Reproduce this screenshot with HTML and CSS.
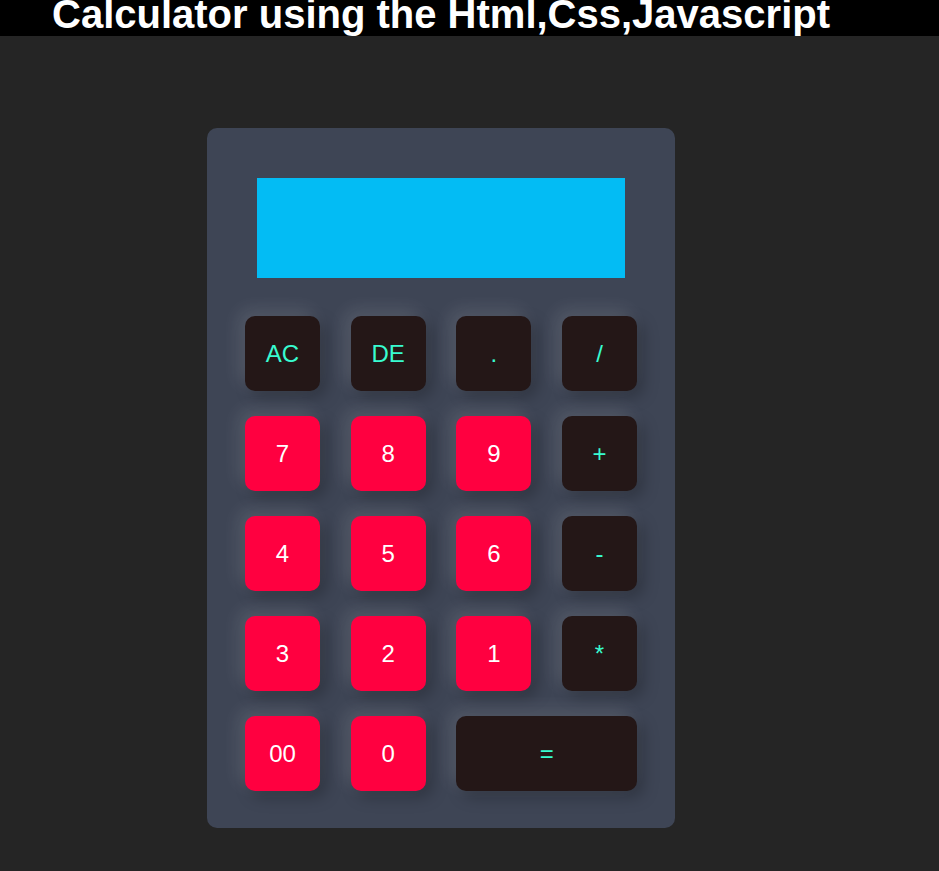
FILE: index.html
```html
<!DOCTYPE html>
<html lang="en">
<head>
    <meta charset="UTF-8">
    <title>Calculator</title>
    <link rel="stylesheet" href="styles.css">
</head>
<body>

    <div class="topbar">
        <h1>Calculator using the Html,Css,Javascript</h1>
    </div>

    <div class="calculator">
        <input type="text" class="display" id="display" readonly>

        <div class="keys">
            <button class="key op" data-action="clear">AC</button>
            <button class="key op" data-action="delete">DE</button>
            <button class="key op">.</button>
            <button class="key op">/</button>

            <button class="key num">7</button>
            <button class="key num">8</button>
            <button class="key num">9</button>
            <button class="key op">+</button>

            <button class="key num">4</button>
            <button class="key num">5</button>
            <button class="key num">6</button>
            <button class="key op">-</button>

            <button class="key num">3</button>
            <button class="key num">2</button>
            <button class="key num">1</button>
            <button class="key op">*</button>

            <button class="key num">00</button>
            <button class="key num">0</button>
            <button class="key op equal" data-action="equal">=</button>
        </div>
    </div>

    <script>
        const display = document.getElementById('display');

        document.querySelectorAll('.key').forEach(key => {
            key.addEventListener('click', () => {
                const action = key.dataset.action;

                if (action === 'clear') {
                    display.value = '';
                } else if (action === 'delete') {
                    display.value = display.value.slice(0, -1);
                } else if (action === 'equal') {
                    try {
                        display.value = eval(display.value);
                    } catch (e) {
                        display.value = 'Error';
                    }
                } else {
                    display.value += key.textContent;
                }
            });
        });
    </script>

</body>
</html>
```

FILE: styles.css
```css
body {
    font-family: 'Liberation Sans', Arial, sans-serif;
    background-color: #252525;
    margin: 0;
}

.topbar {
    height: 36px;
    background-color: #000000;
}

.topbar h1 {
    margin: 0;
    padding-left: 52px;
    font-size: 40px;
    line-height: 28px;
    color: #ffffff;
    white-space: nowrap;
}

.calculator {
    width: 468px;
    box-sizing: border-box;
    margin: 92px 0 0 207px;
    padding: 50px 38px 37px;
    background-color: #3e4555;
    border-radius: 10px;
}

.display {
    display: block;
    width: 368px;
    height: 100px;
    box-sizing: border-box;
    margin: 0 auto 38px;
    border: none;
    outline: none;
    padding: 0 15px;
    background-color: #03bcf4;
    color: #ffffff;
    font-family: inherit;
    font-size: 32px;
    text-align: right;
}

.keys {
    display: grid;
    grid-template-columns: repeat(4, 75px);
    justify-content: space-between;
    row-gap: 25px;
}

.key {
    height: 75px;
    border: none;
    border-radius: 10px;
    font-family: inherit;
    font-size: 24px;
    cursor: pointer;
    box-shadow: -6px -6px 18px rgba(255, 255, 255, 0.12),
                6px 6px 16px rgba(0, 0, 0, 0.25);
}

.num {
    background-color: #ff0040;
    color: #ffffff;
}

.op {
    background-color: #241717;
    color: #38fbd0;
}

.equal {
    grid-column: span 2;
}

.key:active {
    box-shadow: inset -3px -3px 8px rgba(255, 255, 255, 0.1),
                inset 3px 3px 8px rgba(0, 0, 0, 0.3);
}
```
